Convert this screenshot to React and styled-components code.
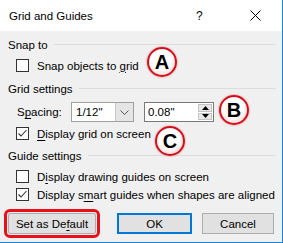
import React from 'react'
import styled, { createGlobalStyle } from 'styled-components'

const Global = createGlobalStyle`
  html, body {
    margin: 0;
    padding: 0;
    background: #f0f0f0;
  }
  * { box-sizing: border-box; }
`

const Window = styled.div`
  position: relative;
  width: 283px;
  height: 243px;
  background: #f0f0f0;
  border-right: 1px solid #1883d7;
  border-bottom: 1px solid #1883d7;
  font-family: "Liberation Sans", Arial, sans-serif;
  font-size: 11.5px;
  color: #000;
  overflow: hidden;
`

const TitleBar = styled.div`
  height: 31px;
  background: #fff;
  display: flex;
  align-items: center;
  padding-left: 9px;
  font-size: 11.5px;
`

const Title = styled.div`
  flex: 1;
  margin-top: 1px;
`

const Help = styled.div`
  width: 12px;
  margin-right: 38px;
  font-size: 12px;
`

const Close = styled.div`
  width: 36px;
  display: flex;
  align-items: center;
  justify-content: flex-start;
  padding-left: 4px;
`

const Body = styled.div`
  display: flex;
  flex-direction: column;
  padding: 0 6px 0 8px;
`

const Legend = styled.div`
  display: flex;
  align-items: center;
  height: 14px;
  margin-top: ${p => p.$top}px;
  gap: 6px;
  span { white-space: nowrap; }
  &::after {
    content: '';
    flex: 1;
    height: 1px;
    background: #dcdcdc;
    margin-top: -1px;
  }
`

const CheckRow = styled.label`
  display: flex;
  align-items: center;
  height: 13px;
  margin-top: ${p => p.$top}px;
  padding-left: 8px;
  gap: 8px;
  white-space: nowrap;
`

const Box = styled.span`
  width: 13px;
  height: 13px;
  border: 1px solid #333;
  background: #fff;
  display: flex;
  align-items: center;
  justify-content: center;
  flex: none;
`

const U = styled.span`
  text-decoration: underline;
  text-underline-offset: 2px;
`

const SpacingRow = styled.div`
  display: flex;
  align-items: center;
  height: 20px;
  margin-top: 6px;
  padding-left: 9px;
`

const SpacingLabel = styled.span`
  width: 54px;
`

const Combo = styled.div`
  width: 63px;
  height: 20px;
  display: flex;
  border: 1px solid #a0a0a0;
  background: #fff;
`

const ComboText = styled.div`
  flex: 1;
  padding-left: 4px;
  display: flex;
  align-items: center;
`

const ComboButton = styled.div`
  width: 18px;
  background: #e5e5e5;
  border-left: 1px solid #c8c8c8;
  display: flex;
  align-items: center;
  justify-content: center;
`

const Spin = styled.div`
  width: 70px;
  height: 20px;
  margin-left: 10px;
  display: flex;
  border: 1px solid #7a7a7a;
  background: #fff;
`

const SpinText = styled.div`
  flex: 1;
  padding-left: 3px;
  display: flex;
  align-items: center;
`

const SpinButtons = styled.div`
  width: 15px;
  display: flex;
  flex-direction: column;
  padding: 1px 1px 1px 0;
  gap: 1px;
`

const SpinButton = styled.div`
  flex: 1;
  background: #e8e8e8;
  border: 1px solid #c4c4c4;
  display: flex;
  align-items: center;
  justify-content: center;
`

const ButtonRow = styled.div`
  display: flex;
  align-items: center;
  height: 21px;
  margin-top: 12px;
`

const Button = styled.button`
  height: 21px;
  width: ${p => p.$w}px;
  margin-left: ${p => p.$ml}px;
  font-family: inherit;
  font-size: 11.5px;
  color: #000;
  background: #e1e1e1;
  border: ${p => (p.$primary ? '2px solid #0078d7' : '1px solid #adadad')};
  padding: 0;
  border-radius: 0;
  ${p =>
    p.$marked &&
    `
    outline: 3px solid #e81019;
    outline-offset: 1px;
    border-radius: 2px;
  `}
`

const Badge = styled.div`
  position: absolute;
  left: ${p => p.$x - 15}px;
  top: ${p => p.$y - 15}px;
  width: 30px;
  height: 30px;
  border-radius: 50%;
  border: 2px solid #d40f1a;
  background: radial-gradient(circle at 45% 40%, #ffffff 0%, #ffffff 45%, #fbe3e3 70%, #f2a8a8 100%);
  box-shadow: 0 0 1px 1px rgba(230, 120, 120, 0.35);
  display: flex;
  align-items: center;
  justify-content: center;
  font-family: "Liberation Sans", Arial, sans-serif;
  font-weight: bold;
  font-size: 20px;
  color: #000;
  line-height: 1;
`

const Check = ({ on }) => (
  <Box>
    {on && (
      <svg width="11" height="11" viewBox="0 0 11 11">
        <polyline points="1.5,5.5 4,8 9.5,2" fill="none" stroke="#333" strokeWidth="1.1" />
      </svg>
    )}
  </Box>
)

export default function App() {
  return (
    <Window>
      <Global />
      <TitleBar>
        <Title>Grid and Guides</Title>
        <Help>?</Help>
        <Close>
          <svg width="11" height="11" viewBox="0 0 11 11">
            <path d="M0.5 0.5 L10.5 10.5 M10.5 0.5 L0.5 10.5" stroke="#000" strokeWidth="1" />
          </svg>
        </Close>
      </TitleBar>
      <Body>
        <Legend $top={7}><span>Snap to</span></Legend>
        <CheckRow $top={7}>
          <Check />
          <span>Snap objects to <U>g</U>rid</span>
        </CheckRow>

        <Legend $top={10}><span>Grid settings</span></Legend>
        <SpacingRow>
          <SpacingLabel>S<U>p</U>acing:</SpacingLabel>
          <Combo>
            <ComboText>1/12"</ComboText>
            <ComboButton>
              <svg width="9" height="5" viewBox="0 0 9 5">
                <polyline points="0.5,0.5 4.5,4.5 8.5,0.5" fill="none" stroke="#555" strokeWidth="1" />
              </svg>
            </ComboButton>
          </Combo>
          <Spin>
            <SpinText>0.08"</SpinText>
            <SpinButtons>
              <SpinButton>
                <svg width="7" height="4" viewBox="0 0 7 4"><polygon points="0,4 7,4 3.5,0" fill="#000" /></svg>
              </SpinButton>
              <SpinButton>
                <svg width="7" height="4" viewBox="0 0 7 4"><polygon points="0,0 7,0 3.5,4" fill="#000" /></svg>
              </SpinButton>
            </SpinButtons>
          </Spin>
        </SpacingRow>
        <CheckRow $top={5}>
          <Check on />
          <span><U>D</U>isplay grid on screen</span>
        </CheckRow>

        <Legend $top={9}><span>Guide settings</span></Legend>
        <CheckRow $top={7}>
          <Check />
          <span>D<U>i</U>splay drawing guides on screen</span>
        </CheckRow>
        <CheckRow $top={5}>
          <Check on />
          <span>Display s<U>m</U>art guides when shapes are aligned</span>
        </CheckRow>

        <ButtonRow>
          <Button $w={88} $ml={0} $marked>Set as De<U>f</U>ault</Button>
          <Button $w={75} $ml={21} $primary>OK</Button>
          <Button $w={72} $ml={10}>Cancel</Button>
        </ButtonRow>
      </Body>

      <Badge $x={162} $y={62}>A</Badge>
      <Badge $x={234} $y={110}>B</Badge>
      <Badge $x={170} $y={141}>C</Badge>
    </Window>
  )
}
